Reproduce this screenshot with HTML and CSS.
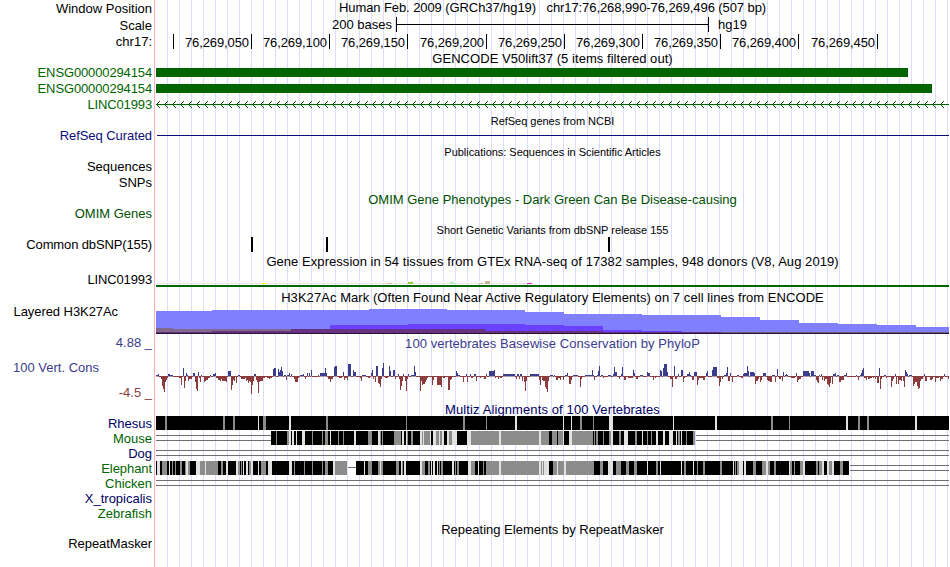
FILE: index.html
```
<!DOCTYPE html>
<html>
<head>
    <meta charset="utf-8">
    <title>chr17:76,268,990-76,269,496</title>
    <link rel="stylesheet" href="styles.css">
</head>
<body>
    <div class="browser">
        <div class="row h17">
            <div class="label pt1">Window Position</div>
            <div class="track"><p class="title t-pos">Human Feb. 2009 (GRCh37/hg19) &nbsp; chr17:76,268,990-76,269,496 (507 bp)</p></div>
        </div>
        <div class="row h17">
            <div class="label pt1">Scale</div>
            <div class="track scale">
                <span class="scale-from">200 bases</span>
                <span class="scale-bar"></span>
                <span class="scale-to">hg19</span>
            </div>
        </div>
        <div class="row h17">
            <div class="label">chr17:</div>
            <div class="track"><svg id="ruler" viewBox="155 34 795 17" width="795" height="17"></svg></div>
        </div>

        <div class="row h14">
            <div class="label"></div>
            <div class="track"><p class="title t-gencode">GENCODE V50lift37 (5 items filtered out)</p></div>
        </div>
        <div class="row h16 green">
            <div class="label tight">ENSG00000294154</div>
            <div class="track"><div class="exon exon-1"></div></div>
        </div>
        <div class="row h16 green">
            <div class="label tight">ENSG00000294154</div>
            <div class="track"><div class="exon exon-2"></div></div>
        </div>
        <div class="row h16 green">
            <div class="label tight">LINC01993</div>
            <div class="track"><svg id="intron" viewBox="155 97 795 16" width="795" height="16"></svg></div>
        </div>

        <div class="row h15">
            <div class="label"></div>
            <div class="track"><p class="title small">RefSeq genes from NCBI</p></div>
        </div>
        <div class="row h16 navy">
            <div class="label slim">RefSeq Curated</div>
            <div class="track"><div class="refseq-line"></div></div>
        </div>
        <div class="row h15">
            <div class="label"></div>
            <div class="track"><p class="title small">Publications: Sequences in Scientific Articles</p></div>
        </div>
        <div class="row h16"><div class="label">Sequences</div><div class="track"></div></div>
        <div class="row h17"><div class="label">SNPs</div><div class="track"></div></div>
        <div class="row h14 omim">
            <div class="label"></div>
            <div class="track"><p class="title t-omim">OMIM Gene Phenotypes - Dark Green Can Be Disease-causing</p></div>
        </div>
        <div class="row h16 omim"><div class="label">OMIM Genes</div><div class="track"></div></div>
        <div class="row h15">
            <div class="label"></div>
            <div class="track"><p class="title small">Short Genetic Variants from dbSNP release 155</p></div>
        </div>
        <div class="row h17">
            <div class="label tight">Common dbSNP(155)</div>
            <div class="track">
                <svg viewBox="155 237 795 17" width="795" height="17">
                    <rect x="251" y="237" width="2" height="15"/>
                    <rect x="326" y="237" width="2" height="15"/>
                    <rect x="608" y="237" width="2" height="15"/>
                </svg>
            </div>
        </div>

        <div class="row h18">
            <div class="label"></div>
            <div class="track"><p class="title t-gtex">Gene Expression in 54 tissues from GTEx RNA-seq of 17382 samples, 948 donors (V8, Aug 2019)</p></div>
        </div>
        <div class="row h18">
            <div class="label tight">LINC01993</div>
            <div class="track">
                <svg viewBox="155 272 795 18" width="795" height="18">
                    <rect x="156" y="281" width="377" height="3" fill="#fff"/>
                    <rect x="156" y="281" width="377" height="1" fill="#edf3f1"/>
                    <rect x="156" y="283" width="377" height="1" fill="#e4e4e4"/>
                    <rect x="261" y="283" width="5" height="1" fill="#eeee00"/>
                    <rect x="387" y="283" width="5" height="1" fill="#cdb79e"/>
                    <rect x="408" y="282" width="5" height="2" fill="#9acd32"/>
                    <rect x="450" y="282" width="5" height="2" fill="#b4eeb4"/>
                    <rect x="478" y="283" width="5" height="1" fill="#cdb79e"/>
                    <rect x="485" y="281" width="5" height="3" fill="#cdaf95"/>
                    <rect x="527" y="283" width="5" height="1" fill="#d020d0"/>
                    <rect x="156" y="285" width="794" height="2" fill="#006400"/>
                </svg>
            </div>
        </div>

        <div class="row h14">
            <div class="label"></div>
            <div class="track"><p class="title t-h3k">H3K27Ac Mark (Often Found Near Active Regulatory Elements) on 7 cell lines from ENCODE</p></div>
        </div>
        <div class="row h31">
            <div class="label slim h3k-label">Layered H3K27Ac</div>
            <div class="track"><svg id="h3k" viewBox="155 304 795 31" width="795" height="31"></svg></div>
        </div>

        <div class="row h67">
            <div class="label cons">
                <span class="cons-max">4.88 _</span>
                <span class="cons-name">100 Vert. Cons</span>
                <span class="cons-min">-4.5 _</span>
            </div>
            <div class="track">
                <p class="title pt1 t-phylo">100 vertebrates Basewise Conservation by PhyloP</p>
                <svg id="wiggle" viewBox="155 351 795 51" width="795" height="51"></svg>
            </div>
        </div>

        <div class="row h14 navy2">
            <div class="label"></div>
            <div class="track"><p class="title t-multiz">Multiz Alignments of 100 Vertebrates</p></div>
        </div>
        <div class="row h15 navy2"><div class="label">Rhesus</div><div class="track"><svg id="rhesus" viewBox="155 0 795 15" width="795" height="15"></svg></div></div>
        <div class="row h15 green"><div class="label">Mouse</div><div class="track"><svg id="mouse" viewBox="155 0 795 15" width="795" height="15"></svg></div></div>
        <div class="row h15 navy2"><div class="label">Dog</div><div class="track"><svg id="dog" viewBox="155 0 795 15" width="795" height="15"></svg></div></div>
        <div class="row h15 green"><div class="label slim">Elephant</div><div class="track"><svg id="elephant" viewBox="155 0 795 15" width="795" height="15"></svg></div></div>
        <div class="row h15 green"><div class="label">Chicken</div><div class="track"><svg id="chicken" viewBox="155 0 795 15" width="795" height="15"></svg></div></div>
        <div class="row h15 navy2"><div class="label">X_tropicalis</div><div class="track"></div></div>
        <div class="row h15 green"><div class="label">Zebrafish</div><div class="track"></div></div>

        <div class="row h15">
            <div class="label"></div>
            <div class="track"><p class="title pt1 t-rmsk">Repeating Elements by RepeatMasker</p></div>
        </div>
        <div class="row h31"><div class="label slim">RepeatMasker</div><div class="track"></div></div>
    </div>
    <script src="tracks.js"></script>
</body>
</html>
```
FILE: styles.css
```
*{
	margin: 0;
	padding: 0;
}
body{
	background-color: #fff;
	font-family: "Liberation Sans", Arial, Helvetica, sans-serif;
	font-size: 13px;
	line-height: 15px;
	color: #000;
}
.browser{
	width: 949px;
	height: 567px;
	overflow: hidden;
	/* guide lines every 12px, red line between labels and data */
	background-image:
		linear-gradient(#ffb4b4, #ffb4b4),
		repeating-linear-gradient(to right, #dcdcff 0, #dcdcff 1px, transparent 1px, transparent 12px);
	background-repeat: no-repeat;
	background-size: 1px 100%, 783px 100%;
	background-position: 154px 0, 167px 0;
}
.row{
	display: flex;
	width: 950px;
}
.h14{ height: 14px; }
.h15{ height: 15px; }
.h16{ height: 16px; }
.h17{ height: 17px; }
.h18{ height: 18px; }
.h31{ height: 31px; }
.h67{ height: 67px; }
.label{
	box-sizing: border-box;
	width: 155px;
	padding-right: 3px;
	text-align: right;
	white-space: nowrap;
}
.tight{
	letter-spacing: -0.13px;
}
.slim{
	letter-spacing: -0.07px;
}
.label.pt1, .title.pt1{
	padding-top: 1px;
}
.track{
	width: 795px;
}
.track svg{
	display: block;
	shape-rendering: crispEdges;
}
.title{
	text-align: center;
	white-space: nowrap;
}
.small{
	padding-top: 1px;
	font-size: 11px;
	letter-spacing: -0.03px;
}
.t-pos{ letter-spacing: -0.085px; }
.t-gencode{ letter-spacing: 0.05px; }
.t-gtex{ letter-spacing: 0.055px; }
.t-h3k{ letter-spacing: 0.06px; }
.t-multiz{ letter-spacing: 0.11px; }
.green{ color: #006400; }
.navy{ color: #0c0c78; }
.navy2{ color: #000064; }
.omim{ color: #005000; }

.scale{
	display: flex;
}
.scale-from{
	width: 237px;
	padding-right: 4px;
	text-align: right;
}
.scale-bar{
	width: 311px;
	height: 15px;
	border-left: 1px solid #000;
	border-right: 1px solid #000;
	background: linear-gradient(#000, #000) 0 7px / 100% 1px no-repeat;
}
.scale-to{
	padding-left: 9px;
}
#ruler text{
	letter-spacing: -0.1px;
}
.exon{
	height: 9px;
	margin: 3px 0 0 1px;
	background-color: #006400;
}
.exon-1{ width: 752px; }
.exon-2{ width: 776px; }
.refseq-line{
	height: 1px;
	margin: 7px 0 0 2px;
	background-color: #0c0c78;
}
.h3k-label{
	padding-right: 37px;
}
.cons{
	display: flex;
	flex-direction: column;
	color: #3c3c8c;
}
.cons-name{
	padding-right: 53px;
	margin: 10px 0;
}
.cons-min{
	color: #8c3c3c;
}
.t-phylo{
	color: #3c3c8c;
	letter-spacing: 0.06px;
}
```
FILE: tracks.js
```
var BLUE = '#3c3c8c', RED = '#8c3c3c';

function rect(x, y, w, h, fill) {
    return '<rect x="' + x + '" y="' + y + '" width="' + w + '" height="' + h + '" fill="' + fill + '"/>';
}
function draw(id, html) {
    document.getElementById(id).innerHTML = html;
}

// ruler
var ticks = [173, 251, 329, 407, 486, 564, 642, 720, 798, 877];
var html = '';
for (var i = 0; i < ticks.length; i++) {
    html += rect(ticks[i], 34, 1, 15, '#000');
    if (i > 0) {
        html += '<text x="' + (ticks[i] - 2) + '" y="47" text-anchor="end">76,269,' + ('00' + i * 50).slice(-3) + '</text>';
    }
}
draw('ruler', html);

// intron with strand arrows
html = rect(156, 104, 794, 1, '#006400');
for (var x = 156; x < 950; x += 8) {
    for (var k = 1; k <= 3; k++) {
        html += rect(x + k, 104 - k, 1, 1, '#006400') + rect(x + k, 104 + k, 1, 1, '#006400');
    }
}
draw('intron', html);

// layered marks: [x, top] steps, each layer runs down to the base line
function steps(list, end, fill) {
    var s = '';
    for (var i = 0; i < list.length; i++) {
        var next = i + 1 < list.length ? list[i + 1][0] : end;
        s += rect(list[i][0], list[i][1], next - list[i][0], 333 - list[i][1], fill);
    }
    return s;
}
draw('h3k',
    steps([[156,311],[212,310],[369,309],[447,310],[525,312],[564,314],[642,315],[721,317],[760,320],[799,323],[838,324],[877,325],[916,327]], 950, '#8080ff') +
    steps([[330,325],[408,324],[525,325],[564,326],[603,330],[642,331]], 682, '#6a40ff') +
    steps([[156,328],[173,329]], 291, '#80698a') +
    steps([[156,332],[212,331],[291,329],[486,331],[603,332]], 721, '#663380') +
    steps([[721,332]], 950, '#6c6078') +
    rect(156, 333, 794, 1, '#26103a'));

// phyloP: [x, width, height], negative goes below the axis
var cons = [
    [156,2,1],[158,1,2],[161,1,-3],[162,1,-10],[163,1,-13],[164,1,-16],[165,1,-6],[166,1,-4],[167,1,-2],[168,2,2],[170,3,1],[174,5,-1],[179,2,-2],[181,1,-9],[182,1,-1],[183,1,8],
    [184,1,-12],[185,1,-5],[186,1,3],[187,1,1],[188,1,-5],[189,3,-3],[192,1,-1],[193,2,3],[195,1,-6],[196,1,-13],[197,1,-15],[198,1,4],[199,1,-2],[200,1,-6],[201,1,1],[204,1,-6],[205,1,-5],
    [206,2,-4],[208,2,-2],[210,1,1],[213,2,2],[215,1,3],[216,2,-2],[218,2,-4],[220,1,-5],[221,1,-3],[222,4,-5],[226,1,-6],[228,3,5],[231,1,-14],[232,1,-9],[233,1,-4],[234,1,-5],[236,1,-7],[238,2,1],
    [241,4,-3],[245,1,-2],[246,1,-5],[247,1,-4],[248,1,-7],[249,1,-5],[250,1,-6],[251,1,-18],[252,1,-9],[253,1,-5],[254,2,2],[256,1,-4],[257,1,-6],[258,1,-17],[259,1,-6],[260,3,-5],[263,2,-2],
    [267,2,-2],[269,1,-3],[270,2,-2],[273,1,7],[274,2,8],[278,1,7],[279,1,4],[280,1,6],[281,1,9],[282,1,5],[284,2,1],[286,1,-4],[287,2,1],[289,1,3],[291,1,2],[294,1,-3],[295,3,-6],[298,1,-2],
    [300,3,1],[303,1,2],[305,1,-3],[307,1,3],[309,1,3],[311,1,6],[316,2,-1],[318,1,1],[320,5,3],[325,1,8],[326,1,3],[328,2,-3],[330,1,-6],[331,2,-3],[334,1,9],[335,2,10],[339,3,-2],[343,1,4],[344,1,-4],[345,2,-2],
    [347,1,-4],[348,3,12],[353,1,6],[354,2,4],[357,2,-1],[360,1,-2],[361,1,-5],[362,4,1],[368,2,-2],[371,1,3],[372,1,6],[373,1,-3],[375,1,-6],[376,2,10],[378,1,-7],[379,1,-8],[380,1,-11],[381,1,-3],[382,1,8],[383,1,13],
    [385,3,-2],[389,1,10],[390,1,5],[393,2,6],[395,1,-3],[398,1,2],[399,1,-3],[400,1,-14],[401,1,-10],[402,1,-5],[403,1,2],[405,1,-5],[406,1,-15],[407,1,-3],[408,1,2],[411,3,1],[414,1,10],[415,1,4],
    [420,1,-15],[421,1,-5],[422,1,-9],[423,2,-8],[425,1,-6],[426,1,-4],[427,1,-2],[432,1,-9],[433,1,-4],[437,4,-9],[441,1,-11],[443,2,-2],[448,2,-14],[450,1,-4],[451,1,-3],
    [456,1,5],[457,1,3],[458,2,1],[463,1,-6],[466,1,2],[467,1,-6],[470,1,2],[471,2,-2],[474,2,2],[476,1,-5],[480,1,-2],[484,2,-3],[486,1,2],[489,6,5],[494,1,6],[495,1,-2],[498,1,-3],[500,2,-2],
    [503,12,2],[516,1,-3],[517,2,2],[519,1,-3],[520,2,2],[522,1,-5],[524,1,-6],[525,1,-15],[526,1,-5],[530,9,2],[539,2,-4],[540,1,-9],[542,1,-4],[543,2,-5],[545,1,-11],[546,1,-13],[547,1,-16],[548,1,-5],
    [550,3,1],[554,1,1],[556,2,-4],[558,2,-2],[560,1,-4],[563,1,-4],[565,2,1],[567,1,3],[569,2,-8],[571,1,-4],[573,5,1],[580,1,-11],[581,1,-3],[585,7,1],[592,1,6],[593,1,1],[594,1,-4],[597,1,1],[598,1,5],[599,1,10],
    [601,2,1],[603,1,-2],[608,3,1],[613,1,2],[614,1,9],[615,2,4],[619,1,-3],[621,1,2],[622,1,9],[624,2,-4],[628,5,-2],[633,1,6],[634,1,3],[636,2,-3],[640,3,1],[647,1,4],[648,2,3],[653,1,-4],[655,1,-2],
    [660,1,6],[661,1,5],[663,1,8],[664,3,12],[667,1,4],[670,2,-3],[672,1,-11],[674,1,10],[675,2,-3],[678,1,2],[681,2,6],[683,1,-6],[684,1,-2],[687,2,2],[689,1,4],[690,1,1],[692,2,-4],[694,3,4],[697,1,-9],[698,1,-4],[699,2,-2],
    [701,2,-2],[703,2,-4],[706,1,3],[707,1,5],[708,3,-1],[712,1,6],[713,4,9],[717,2,-2],[719,1,-10],[720,1,-6],[722,1,-3],[724,2,1],[726,1,3],[727,1,9],[728,2,-5],[730,1,3],[732,1,-6],[737,2,1],[741,2,-2],[743,1,2],
    [744,3,3],[747,1,10],[748,1,5],[750,4,4],[754,1,3],[755,1,-8],[756,2,-5],[758,1,-3],[760,1,-6],[761,1,-4],[763,3,3],[767,1,-4],[768,2,-5],[770,2,-6],[772,3,1],[775,1,-6],[777,1,7],[779,2,-3],[782,1,-5],[783,1,4],
    [785,1,1],[786,1,2],[787,1,1],[791,4,-2],[796,1,3],[797,1,-6],[798,1,-4],[799,2,-3],[803,6,5],[809,1,3],[811,3,5],[814,2,1],[816,1,-4],[817,1,-6],[818,1,-7],[819,1,1],[821,1,2],[822,1,-4],[824,1,-5],[825,2,-3],
    [827,1,-8],[828,1,-9],[829,1,-11],[830,1,-7],[832,1,-8],[833,2,2],[835,1,3],[837,2,1],[839,2,-6],[841,2,-4],[843,1,-4],[844,2,1],[846,1,3],[850,4,-1],[856,1,1],[858,1,-4],[860,1,1],[861,1,3],[862,1,6],[863,1,8],[864,2,-2],
    [866,1,-4],[868,2,-3],[870,2,-2],[873,1,-2],[875,1,-3],[877,2,-7],[879,1,8],[880,1,-13],[881,1,-3],[884,2,1],[886,1,-2],[891,1,-11],[892,1,-5],[893,1,-3],[895,1,2],[896,1,-8],[898,1,-8],[899,2,-4],[901,1,-5],
    [903,1,-5],[904,1,-11],[905,1,6],[906,1,4],[907,1,2],[909,3,1],[913,1,-10],[914,1,-8],[915,2,-6],[917,1,-10],[918,1,-13],[919,1,-12],[920,1,-5],[921,2,-3],[924,1,2],[925,2,-5],[930,2,-4],[932,1,-3],[935,1,-6],
    [936,3,-2],[940,1,-5],[941,2,-3],[944,1,2],[945,2,-1],[948,1,-3]
];
html = rect(156, 376, 794, 1, RED);
cons.forEach(function (c) {
    if (c[2] > 0) {
        html += rect(c[0], 376 - c[2], c[1], c[2], BLUE);
        html += rect(c[0], 376, c[1], 1, '#aa9cb4');
    } else {
        html += rect(c[0], 376, c[1], -c[2], RED);
    }
});
draw('wiggle', html);

// alignments: black block with gray (g) and light (l) stripes, double line where there is a gap
var shades = { g: '#8c8c8c', l: '#e1e1e1' };
function gap(from, to) {
    return rect(from, 4, to - from, 1, '#6e6e6e') + rect(from, 9, to - from, 1, '#6e6e6e');
}
function block(from, to, stripes) {
    var s = rect(from, 0, to - from, 14, '#000');
    stripes.split(' ').forEach(function (st) {
        var m = st.match(/(\d+)([gl])(\d+)/);
        if (+m[1] < to) {
            s += rect(m[1], 0, m[3], 14, shades[m[2]]);
        }
    });
    return s;
}
draw('rhesus', block(156, 950, '165g2 223g2 233g2 258l1 263g3 289l2 326g2 406g1 463g2 486g1 515l2 563l1 571l1 580g2 593g1 609l4 673l1 715l2 771g2 789g1 846l2 858g2 867g2 915l2'));
draw('mouse', gap(156, 271) +
    block(271, 695, '276g1 287g2 289l2 292l2 296l1 302l3 312g1 322g1 325g3 330l1 338g1 343g1 354l2 368g4 378l2 380g1 382g1 394g7 402l2 406l1 407g1 411g2 ' +
        '420l2 422g1 423l1 424g6 430l1 433l3 436g3 439l1 440g2 442l2 447l2 449g3 452l5 467l4 471g28 499l2 501g38 539l2 541g8 552g5 558g5 563l1 569l3 572g21 ' +
        '594g1 596g2 603g1 609g2 611l2 619g2 624l4 635g2 642l1 647g1 651g1 656l2 663l2 669l4 676l1 678g2 681l1 686g1 693g2') +
    gap(696, 950));
draw('dog', gap(156, 950));
draw('elephant',
    block(156, 347, '157l3 162g5 169l1 172g1 175g1 180g2 185g1 186l2 188g2 196l4 200g5 205l1 206g12 221g2 226l2 236l2 238g2 241g1 243l1 246l2 249g2 251l2 258l1 261g5 268l4 ' +
        '289l3 294g1 304g1 312g1 322g1 325g3 333l2 335g12') +
    rect(348, 6, 8, 1, '#6e6e6e') +
    block(356, 849, '364l1 368g4 378g2 380l1 381g2 396g3 401l1 402g1 404l2 420l2 422g3 428g2 431l1 433l2 437l1 439g1 441g2 452l2 455g1 457g2 468l3 471g4 478l1 483g1 486g1 ' +
        '487g12 499l2 501g38 539l2 541g1 542l1 543g1 544l5 553g4 557l1 558g6 564l2 566g28 600g3 608l5 616g5 626g3 634g3 647l1 656g2 660l1 681l1 684g2 693l1 697g1 703g2 720g2 ' +
        '733l1 735g1 737g2 739l4 744l2 753g3 762g4 766l2 768g2 774g2 789l1 790g2 794g1 800g3 803l2 816g2 819g3 822l2 827l2 829g3 832l2 840g3') +
    gap(850, 950));
draw('chicken', gap(156, 950));
```
